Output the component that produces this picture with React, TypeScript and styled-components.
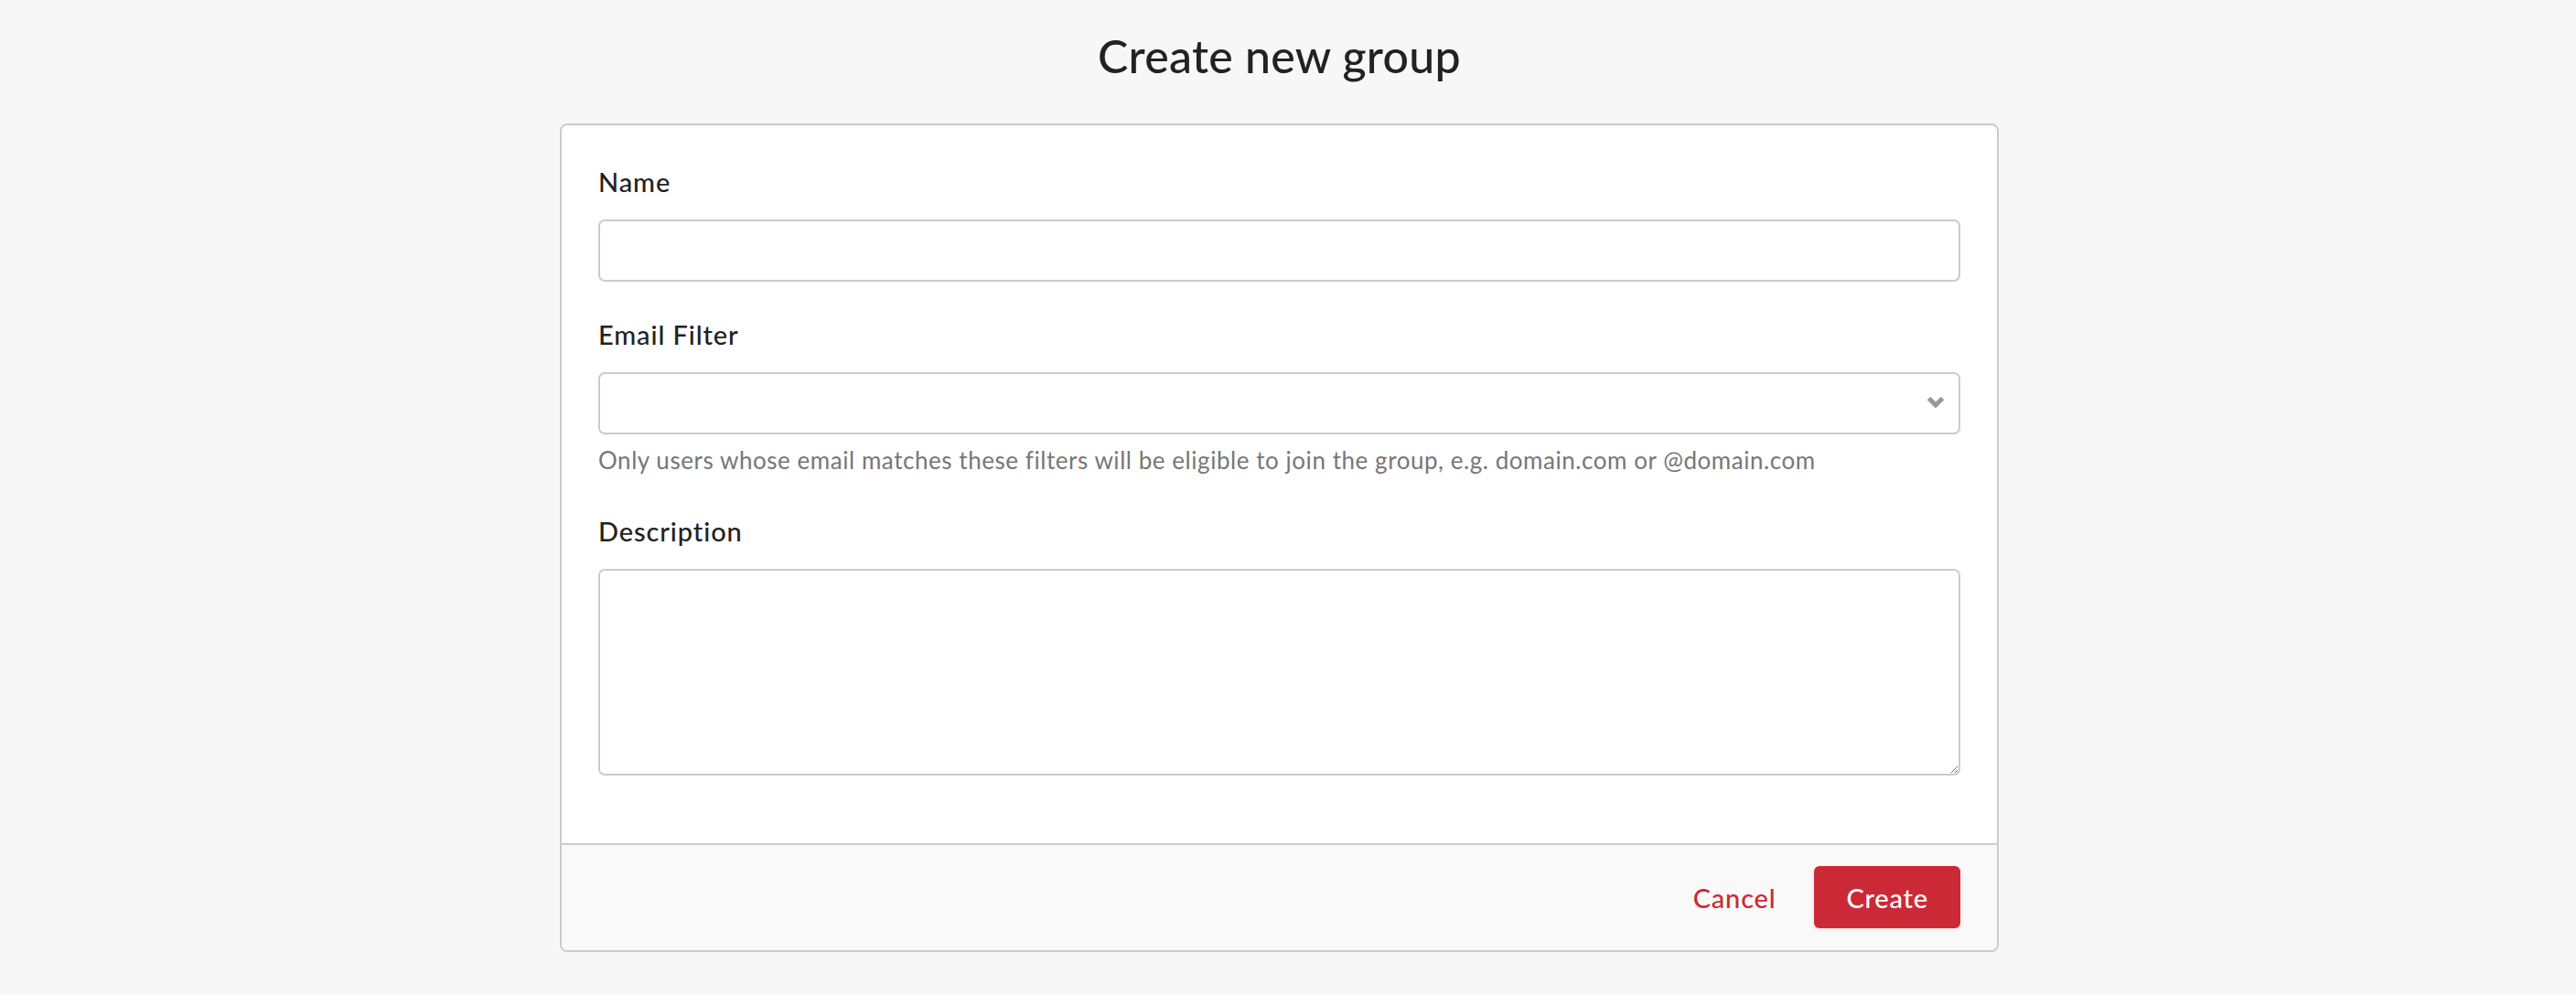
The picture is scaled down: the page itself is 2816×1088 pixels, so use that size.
import styled, { createGlobalStyle } from "styled-components";

const GlobalStyle = createGlobalStyle`
  html, body {
    margin: 0;
    padding: 0;
    background: #f7f7f7;
    font-family: Lato, "Open Sans", sans-serif;
    color: #222;
  }
  * {
    box-sizing: border-box;
  }
`;

const Page = styled.main`
  min-height: 1088px;
  padding: 31px 19px 0 0;
  display: flex;
  flex-direction: column;
  align-items: center;
`;

const Title = styled.h1`
  margin: 0 0 44px;
  font-size: 50px;
  line-height: 60px;
  font-weight: 500;
  letter-spacing: 0.3px;
  color: #222;
`;

const Card = styled.form`
  width: 1573px;
  background: #fff;
  border: 2px solid #cbcbcb;
  border-radius: 8px;
  overflow: hidden;
`;

const Body = styled.div`
  padding: 42px 40px 74px;
  display: flex;
  flex-direction: column;
`;

const Group = styled.div`
  display: flex;
  flex-direction: column;
  margin-bottom: 38px;

  &:last-child {
    margin-bottom: 0;
  }
`;

const Label = styled.label`
  font-size: 29px;
  line-height: 40px;
  font-weight: 500;
  letter-spacing: 0.9px;
  color: #222;
  margin-bottom: 21px;
`;

const fieldBase = `
  width: 100%;
  border: 2px solid #cbcbcb;
  border-radius: 7px;
  background: #fff;
  font-family: inherit;
  font-size: 28px;
  color: #222;
  outline: none;
`;

const TextInput = styled.input`
  ${fieldBase}
  height: 68px;
  padding: 0 20px;
`;

const SelectWrap = styled.div`
  position: relative;
`;

const Select = styled.select`
  ${fieldBase}
  height: 68px;
  padding: 0 60px 0 20px;
  appearance: none;
`;

const Chevron = styled.svg`
  position: absolute;
  right: 17px;
  top: 26px;
  pointer-events: none;
`;

const Help = styled.p`
  margin: 8px 0 0;
  font-size: 26px;
  line-height: 40px;
  letter-spacing: 0.55px;
  color: #777;
`;

const TextArea = styled.textarea`
  ${fieldBase}
  height: 226px;
  padding: 16px 20px;
  resize: both;
`;

const Footer = styled.div`
  border-top: 2px solid #cbcbcb;
  background: #f9f9f9;
  padding: 23px 40px 24px;
  display: flex;
  justify-content: flex-end;
  align-items: center;
`;

const Button = styled.button<{ $primary?: boolean }>`
  height: 68px;
  border-radius: 6px;
  font-family: inherit;
  font-size: 29px;
  font-weight: 500;
  letter-spacing: 0.8px;
  cursor: pointer;
  border: none;
  padding: ${(p) => (p.$primary ? "0 35px" : "0 20px")};
  margin-left: ${(p) => (p.$primary ? "22px" : "0")};
  background: ${(p) => (p.$primary ? "#cc2936" : "transparent")};
  color: ${(p) => (p.$primary ? "#fff" : "#cc2936")};
  box-shadow: ${(p) => (p.$primary ? "0 2px 4px rgba(0, 0, 0, 0.08)" : "none")};
`;

export default function App() {
  return (
    <>
      <GlobalStyle />
      <Page>
        <Title>Create new group</Title>
        <Card onSubmit={(e) => e.preventDefault()}>
          <Body>
            <Group>
              <Label htmlFor="name">Name</Label>
              <TextInput id="name" type="text" />
            </Group>
            <Group>
              <Label htmlFor="filter">Email Filter</Label>
              <SelectWrap>
                <Select id="filter" defaultValue="">
                  <option value=""></option>
                </Select>
                <Chevron width="20" height="14" viewBox="0 0 20 14">
                  <path d="M2.5 2.5 L10 10 L17.5 2.5" fill="none" stroke="#999" strokeWidth="5" />
                </Chevron>
              </SelectWrap>
              <Help>
                Only users whose email matches these filters will be eligible to join the group, e.g. domain.com or @domain.com
              </Help>
            </Group>
            <Group>
              <Label htmlFor="description">Description</Label>
              <TextArea id="description" />
            </Group>
          </Body>
          <Footer>
            <Button type="button">Cancel</Button>
            <Button type="submit" $primary>
              Create
            </Button>
          </Footer>
        </Card>
      </Page>
    </>
  );
}
